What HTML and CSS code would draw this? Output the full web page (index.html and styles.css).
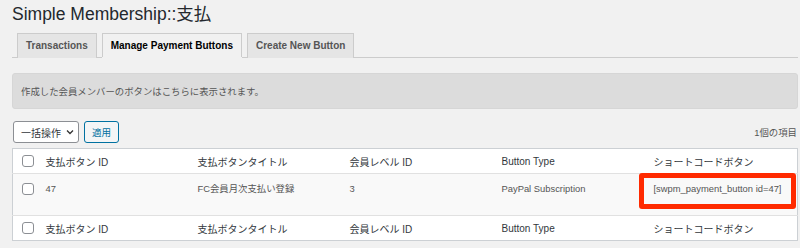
FILE: index.html
```html
<!DOCTYPE html>
<html lang="ja">
<head>
    <meta charset="UTF-8">
    <title>Simple Membership::支払</title>
    <link rel="stylesheet" href="styles.css">
</head>
<body>

    <div class="wrap">
        <h1 class="page-title">Simple Membership::支払</h1>

        <!-- Tabs -->
        <nav class="tabs">
            <a class="tab">Transactions</a>
            <a class="tab active">Manage Payment Buttons</a>
            <a class="tab">Create New Button</a>
        </nav>

        <div class="notice">作成した会員メンバーのボタンはこちらに表示されます。</div>

        <!-- Bulk actions -->
        <div class="tablenav">
            <div class="bulk">
                <div class="select">一括操作
                    <svg width="8" height="6" viewBox="0 0 8 6"><path d="M1 1.5l3 3 3-3" fill="none" stroke="#333" stroke-width="1.3"/></svg>
                </div>
                <button class="apply">適用</button>
            </div>
            <span class="count">1個の項目</span>
        </div>

        <table class="list">
            <thead>
                <tr>
                    <th class="cb"><span class="check"></span></th>
                    <th>支払ボタン ID</th>
                    <th>支払ボタンタイトル</th>
                    <th>会員レベル ID</th>
                    <th>Button Type</th>
                    <th>ショートコードボタン</th>
                </tr>
            </thead>
            <tbody>
                <tr>
                    <td class="cb"><span class="check"></span></td>
                    <td>47</td>
                    <td>FC会員月次支払い登録</td>
                    <td>3</td>
                    <td>PayPal Subscription</td>
                    <td class="shortcode">[swpm_payment_button id=47]<span class="mark"></span></td>
                </tr>
            </tbody>
            <tfoot>
                <tr>
                    <th class="cb"><span class="check"></span></th>
                    <th>支払ボタン ID</th>
                    <th>支払ボタンタイトル</th>
                    <th>会員レベル ID</th>
                    <th>Button Type</th>
                    <th>ショートコードボタン</th>
                </tr>
            </tfoot>
        </table>
    </div>

</body>
</html>
```

FILE: styles.css
```css
* {
    margin: 0;
    padding: 0;
    box-sizing: border-box;
    font-family: "Liberation Sans", Arial, "Noto Sans CJK JP", sans-serif;
}

body {
    background: #f1f1f1;
    color: #444;
}

.wrap {
    padding: 0 2px 0 12px;
}

/* Page title */
.page-title {
    font-size: 17.5px;
    font-weight: normal;
    color: #23282d;
    line-height: 26px;
    padding-top: 1px;
}

/* Tabs */
.tabs {
    display: flex;
    gap: 5px;
    margin-top: 6px;
    padding-left: 5px;
    border-bottom: 1px solid #ccc;
    height: 25px;
}

.tab {
    display: block;
    height: 25px;
    padding: 0 8px;
    font-size: 10px;
    font-weight: bold;
    line-height: 23px;
    color: #555;
    background: #e5e5e5;
    border: 1px solid #ccc;
    border-bottom: none;
}

.tab.active {
    color: #000;
    background: #f1f1f1;
    height: 25px;
    position: relative;
    z-index: 1;
}

.tab.active::after {
    content: "";
    display: block;
    height: 1px;
    margin: 0 -9px;
    background: #f1f1f1;
}

/* Notice */
.notice {
    margin-top: 15px;
    height: 36px;
    padding: 0 8px;
    font-size: 9.4px;
    line-height: 36px;
    color: #555;
    background: #dcdcdc;
    border: 1px solid #d6d6d6;
    border-radius: 3px;
}

/* Bulk actions row */
.tablenav {
    display: flex;
    justify-content: space-between;
    align-items: center;
    margin-top: 12px;
    height: 22px;
}

.bulk {
    display: flex;
    gap: 5px;
    padding-left: 1px;
}

.select {
    display: flex;
    align-items: center;
    gap: 5px;
    width: 66px;
    height: 22px;
    padding-left: 7px;
    font-size: 10px;
    color: #32373c;
    background: #fff;
    border: 1px solid #8c8f94;
    border-radius: 3px;
}

.apply {
    width: 35px;
    height: 22px;
    font-size: 9.5px;
    color: #0071a1;
    background: #f3f5f6;
    border: 1px solid #0071a1;
    border-radius: 3px;
}

.count {
    font-size: 9.4px;
    color: #555;
    padding-right: 1px;
}

/* Table */
.list {
    width: 100%;
    margin-top: 5px;
    border-collapse: collapse;
    border: 1px solid #ccd0d4;
    table-layout: fixed;
}

.list th {
    height: 25px;
    padding: 0 8px;
    text-align: left;
    font-size: 10px;
    font-weight: normal;
    color: #32373c;
    background: #fff;
    width: 152px;
}

.list thead th {
    border-bottom: 1px solid #e1e1e1;
}

.list tfoot th {
    border-top: 1px solid #e1e1e1;
}

.list th.cb,
.list td.cb {
    width: 25px;
    padding: 0 0 0 9px;
}

.list td {
    height: 42px;
    padding: 8px 8px 0;
    vertical-align: top;
    font-size: 9.4px;
    line-height: 14px;
    color: #555;
    background: #f9f9f9;
}

.list td.cb {
    padding-top: 9px;
}

.check {
    display: block;
    width: 12px;
    height: 12px;
    background: #fff;
    border: 1px solid #8c8f94;
    border-radius: 3px;
}

/* Red highlight around the shortcode */
.shortcode {
    position: relative;
}

.mark {
    position: absolute;
    left: -7px;
    right: 1px;
    top: -1px;
    height: 36px;
    border: 5px solid #ff2a00;
    border-radius: 3px;
}
```
